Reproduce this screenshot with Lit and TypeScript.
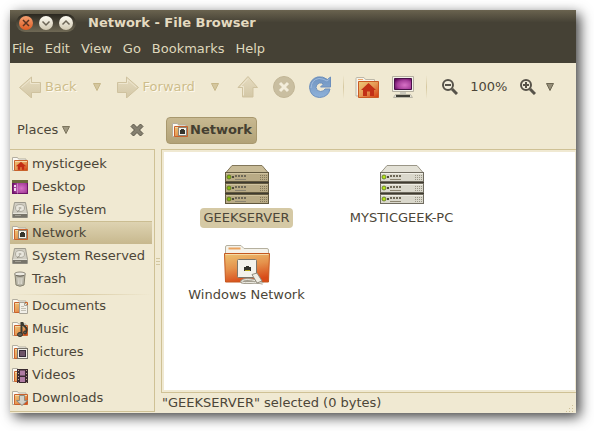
import { LitElement, html, css, svg } from "lit";
import { customElement, property, state } from "lit/decorators.js";
import { classMap } from "lit/directives/class-map.js";

/* Gradients shared by the drawings of one element. */
const defs = html`<svg class="defs" aria-hidden="true" width="0" height="0">
  <defs>
    <linearGradient id="orange" x1="0" y1="0" x2="1" y2="1">
      <stop offset="0" stop-color="#efc878" />
      <stop offset=".5" stop-color="#e59a55" />
      <stop offset="1" stop-color="#d4380c" />
    </linearGradient>
    <linearGradient id="amber" x1=".1" y1="0" x2=".4" y2="1">
      <stop offset="0" stop-color="#ecc070" />
      <stop offset=".5" stop-color="#e5924c" />
      <stop offset="1" stop-color="#d84a18" />
    </linearGradient>
    <linearGradient id="beige" x1="0" y1="0" x2="0" y2="1">
      <stop offset="0" stop-color="#e6dcc0" />
      <stop offset="1" stop-color="#d3c7a6" />
    </linearGradient>
    <linearGradient id="blue" x1="0" y1="0" x2="0" y2="1">
      <stop offset="0" stop-color="#6f93bf" />
      <stop offset="1" stop-color="#8fb2da" />
    </linearGradient>
    <radialGradient id="purple" cx=".6" cy=".6" r=".7">
      <stop offset="0" stop-color="#d873c6" />
      <stop offset=".6" stop-color="#a8409c" />
      <stop offset="1" stop-color="#5f0a5c" />
    </radialGradient>
  </defs>
</svg>`;

const folder = svg`
  <path d="M.5 14.500V1.500h5l1 1.500h7.500V14.500z" fill="#fbf9f3" stroke="#b3aea0" />
  <path d="M2.500 4.500h13v10h-13z" fill="url(#orange)" stroke="#c9622c" />
  <path d="M3 5.500h12" stroke="#f4d9a8" />`;

const drive = svg`
  <path d="M2.500 .5h11l2 11v4H.5v-4z" fill="#d0cdc2" stroke="#9d9a8e" />
  <ellipse cx="8" cy="6" rx="4.500" ry="3.500" fill="#e8e6dd" stroke="#aeab9f" />
  <ellipse cx="8" cy="6" rx="1.500" ry="1" fill="#b5b2a6" />
  <path d="M1 12h14v3.500H1z" fill="#77746a" />
  <path d="M1 11.500h14" stroke="#e4e2d8" /><path d="M3 13.500h6" stroke="#a19e92" />
  <path d="M5 10l3-2.500" stroke="#918e82" />`;

const socket = svg`
  <rect x="6.500" y="5.500" width="8" height="8" fill="#f4f2ea" stroke="#8b8577" />
  <rect x="8" y="8" width="5" height="4" fill="#35352e" /><rect x="9" y="7" width="3" height="1" fill="#35352e" />`;

const small: Record<string, unknown> = {
  home: svg`${folder}<path d="M9 6L4.500 10h1.500V13.500h2v-2.500h2V13.500h2V10h1.500z" fill="#c22c14" stroke="#c22c14" stroke-width=".5" />`,
  desktop: svg`
    <rect x=".5" y="1.500" width="15" height="13" fill="url(#purple)" stroke="#6d1467" />
    <rect x="0" y="1" width="16" height="3" fill="#6c6a3c" />
    <path d="M2 6h2v2H2zM2 9h2v3H2z" fill="#f3d9f0" />
    <path d="M5.500 4.500v10" stroke="#c882c2" />`,
  drive,
  network: svg`${folder}${socket}`,
  trash: svg`
    <path d="M3 3.500l1 10.500q4 2.500 8 0L13 3.500z" fill="#b9b6a8" stroke="#85816f" />
    <ellipse cx="8" cy="3" rx="5.500" ry="2" fill="#eceae1" stroke="#8d897c" />
    <path d="M4 4.500q4 1.500 8 0" stroke="#6e6a5e" fill="none" />
    <path d="M6 7l.5 6M8 7v6M10 7l-.5 6" stroke="#dedbd0" />`,
  documents: svg`${folder}
    <path d="M7.500 4.500h5l3 3v8h-8z" fill="#f1efe8" stroke="#a8a497" />
    <path d="M12.500 4.500v3h3" stroke="#a8a497" />
    <path d="M9 8.500h3M9 10.500h5M9 12.500h5" stroke="#c3c0b4" />`,
  music: svg`${folder}
    <path d="M9.500 13.500V2l1 0q.5 3 3 4 2 2 .5 5" stroke="#3a3a32" stroke-width="2" />
    <ellipse cx="8" cy="13.500" rx="2.500" ry="2" fill="#5d5d52" stroke="#33332c" />
    <ellipse cx="13" cy="11.500" rx="1.500" ry="1.500" fill="#5d5d52" stroke="#33332c" />`,
  pictures: svg`${folder}
    <rect x="5.500" y="4.500" width="10" height="10" fill="#f1efe8" stroke="#77736a" />
    <rect x="7.500" y="6.500" width="6" height="6" fill="#6d5468" stroke="#352a38" />`,
  videos: svg`${folder}
    <rect x="5" y="2" width="11" height="14" fill="#3a2a30" />
    <path d="M8 3.500h5v5H8zM8 10h5v5H8z" fill="#b07ca4" />
    <path d="M6.500 3v13M14.500 3v13" stroke="#c3a394" stroke-dasharray="1 2" />`,
  downloads: svg`${folder}
    <path d="M7.500 5.500h5v5h3L10 15.500 4.500 10.500h3z" fill="#d3d1c8" stroke="#8f8c81" />`,
};

const arrow = svg`<path d="M.5 11.500L12.500 1v5.500h9v10h-9V22z" fill="url(#beige)" stroke="#cfc29f" />
  <path d="M2.500 11.500L11.500 3.500v4h9" fill="none" stroke="#eee6cf" />`;

const tools: Record<string, unknown> = {
  back: arrow,
  forward: svg`<g transform="matrix(-1 0 0 1 22 0)">${arrow}</g>`,
  up: svg`<path d="M11 .5L20.500 11.500h-4.500v9.500h-10.500v-9.500H1z" fill="url(#beige)" stroke="#cfc29f" />
    <path d="M11 2.500L3.500 10.500h3v9" fill="none" stroke="#eee6cf" />`,
  stop: svg`<circle cx="11" cy="11" r="10.500" fill="#c9bea0" stroke="#c2b696" />
    <path d="M7 7l8 8M15 7l-8 8" stroke="#f3eddb" stroke-width="3" />`,
  reload: svg`<path d="M18.500 3.500L21.500 1v10H11.500l3-3q-2-1.500-4-1-3.500 1-3.500 4.500.5 4 4.500 4 3.500 0 4.500-2.500h5q-1.500 8-10.500 8.500Q1.500 21 .5 11.500 1 3 8.500 1q5.500-1 10 2.500z" fill="url(#blue)" stroke="#6c8fbd" />
    <path d="M2 12Q2.500 3.500 10 2.500q4 0 8 2.500l2.500-2" fill="none" stroke="#a0bbdd" />`,
  home: svg`<path d="M1 20V2.500q0-1 1-1h7l1.500 2h9v16z" fill="#f7f4ea" stroke="#bdb8a9" />
    <path d="M3 3.500h5" stroke="#eda46b" />
    <path d="M3.500 5.500h20v16h-20z" fill="url(#orange)" stroke="#ca5a25" />
    <path d="M13.500 7L6 14h2v6h4v-4.500h3V20h4v-6h2z" fill="#c22f16" />`,
  computer: svg`<path d="M.5.500h21v15H.5z" fill="#f3f1e9" stroke="#b4af9f" />
    <path d="M2.500 2.500h17v11h-17z" fill="url(#purple)" stroke="#4a1049" />
    <path d="M8 16h6v2H8z" fill="#cbc8bb" />
    <path d="M1.500 21.500l2-3h15l2 3z" fill="#e6e3d8" stroke="#b9b5a6" /><path d="M4 20h14" stroke="#3f3e36" stroke-width="2" />`,
  zoomOut: svg`<circle cx="6" cy="6" r="5" fill="#f3eedd" stroke="#57534a" stroke-width="2" />
    <path d="M10 10l5 5" stroke="#57534a" stroke-width="3" /><path d="M3 6h6" stroke="#57534a" stroke-width="2" />`,
  zoomIn: svg`<circle cx="6" cy="6" r="5" fill="#f3eedd" stroke="#57534a" stroke-width="2" />
    <path d="M10 10l5 5" stroke="#57534a" stroke-width="3" /><path d="M3 6h6M6 3v6" stroke="#57534a" stroke-width="2" />`,
};

const drawing = (content: unknown, w: number, h: number) =>
  html`<svg width=${w} height=${h} viewBox="0 0 ${w} ${h}" aria-hidden="true">${content}</svg>`;

const triangle = drawing(svg`<path d="M.5.5h7L4 7.500z" fill="currentColor" fill-opacity=".7" stroke="currentColor" />`, 8, 8);

const unit = (y: number, lit: boolean) => svg`
  <rect x=".5" y="${y}.5" width="43" height="9" fill=${lit ? "#dad8cc" : "#b9ab86"} stroke=${lit ? "#706c60" : "#62593f"} />
  <path d="M1 ${y + 1}.500h42" stroke=${lit ? "#f1efe6" : "#d0c3a0"} />
  <circle cx="4" cy="${y + 5}" r="2" fill=${lit ? "#b4e614" : "#86bb08"} stroke="#5c6e28" stroke-width=".8" />
  <path d="M7 ${y + 5}h2" stroke="#4f4a3c" stroke-width="2" />
  <path d="M10 ${y + 4}h11" stroke="#6e6857" stroke-width="2" stroke-dasharray="2 1" />
  <path d="M10 ${y + 7}.500h11" stroke="#8c8571" />
  <path d="M35 ${y + 3}.500h7M35 ${y + 5}.500h7M35 ${y + 7}.500h7" stroke=${lit ? "#9a9687" : "#82775a"} stroke-dasharray="1 1" />`;

const server = (lit: boolean) => svg`
  <path d="M1 7.500L7 .5h30l6 7z" fill=${lit ? "#e3e1d6" : "#c8bb97"} stroke=${lit ? "#9a9687" : "#82775a"} />
  <path d="M0 17.500h44M0 28.500h44" stroke="#3f3b30" />
  ${unit(7, lit)}${unit(18, lit)}${unit(29, lit)}`;

const sharedFolder = svg`
  <path d="M1.500 12V2q0-1.500 1.500-1.500h14l3 3h23q1.500 0 1.500 1.500v8z" fill="#f4f2ea" stroke="#b5b09f" />
  <path d="M4.500 3.500h12" stroke="#eaa35f" stroke-width="2" />
  <path d="M.5 8.500h45l-1 28.500h-43z" fill="url(#amber)" stroke="#c4581f" />
  <path d="M1.500 9.500h43" stroke="#f6d9a6" />
  <rect x="13.500" y="14.500" width="19" height="18" rx="1" fill="#f4f3ec" stroke="#7d776b" />
  <path d="M20 26v-4h2v-1h3v1h2v4z" fill="#33332b" /><path d="M21 25.500h5" stroke="#b8a81c" />
  <path d="M33 36q-12-3-15 0-2 2 8 1.500t13 1" fill="none" stroke="#a39e90" stroke-width="3" />
  <path d="M33 36q-12-3-15 0-2 2 8 1.500t13 1" fill="none" stroke="#eeece3" />
  <path d="M28 29.500l5-1.500 5 8-5 2z" fill="#efede4" stroke="#918c7e" />`;

const controls = css`
  :host { font: 13px/20px "DejaVu Sans", sans-serif; color: #4c4638; }
  button { font: inherit; color: inherit; background: none; border: 0; margin: 0; padding: 0; text-align: left; white-space: nowrap; }
  svg { display: block; flex: none; fill: none; }
  .defs { position: absolute; }
`;

interface Place { name: string; icon: string; }

@customElement("places-panel")
export class PlacesPanel extends LitElement {
  @property() selected = "";

  static styles = [controls, css`
    :host { display: flex; flex-direction: column; padding-bottom: 1px; }
    header { display: flex; align-items: center; justify-content: space-between; height: 38px; padding: 0 11px 0 7px; }
    .title { display: flex; align-items: center; gap: 4px; }
    .title svg { color: #7c755e; }
    nav { flex: 1; border: 1px solid #cfc195; border-left: 0; padding: 2px 2px 1px 0; }
    ul { list-style: none; margin: 0; padding: 0; }
    ul + ul { margin-top: 4px; background: linear-gradient(90deg, transparent, #d9cba4 50%, transparent) top / 100% 1px no-repeat; }
    .place { display: flex; align-items: center; gap: 4px; width: 100%; height: 23px; padding-left: 2px; }
    .current { background: linear-gradient(#dfd4b3, #c7b88e); box-shadow: inset 0 1px #cbbd92; }
  `];

  private groups: Place[][] = [
    [
      { name: "mysticgeek", icon: "home" },
      { name: "Desktop", icon: "desktop" },
      { name: "File System", icon: "drive" },
      { name: "Network", icon: "network" },
      { name: "System Reserved", icon: "drive" },
      { name: "Trash", icon: "trash" },
    ],
    [
      { name: "Documents", icon: "documents" },
      { name: "Music", icon: "music" },
      { name: "Pictures", icon: "pictures" },
      { name: "Videos", icon: "videos" },
      { name: "Downloads", icon: "downloads" },
    ],
  ];

  render() {
    return html`${defs}
      <header>
        <button class="title">Places ${triangle}</button>
        <button aria-label="Close side pane">
          ${drawing(svg`<path d="M1 3.500L3.500 1 7 4.500 10.500 1 13 3.500 9.500 7l3.500 3.500-2.500 2.500L7 9.500 3.500 13 1 10.500 4.500 7z" fill="#858070" stroke="#5a5548" />`, 14, 14)}
        </button>
      </header>
      <nav aria-label="Places">
        ${this.groups.map((group) => html`<ul>
          ${group.map((p) => html`<li>
            <button class=${classMap({ place: true, current: p.name === this.selected })}>
              ${drawing(small[p.icon], 16, 16)}${p.name}
            </button>
          </li>`)}
        </ul>`)}
      </nav>`;
  }
}

@customElement("app-root")
export class AppRoot extends LitElement {
  @state() private selected = "GEEKSERVER";

  static styles = [controls, css`
    :host { display: block; box-sizing: border-box; min-height: 100vh; padding: 10px 18px 18px 10px; background: #fff; }
    .window { display: flex; flex-direction: column; min-height: calc(100vh - 28px); background: #f0e9d2; box-shadow: 4px 4px 12px rgba(0, 0, 0, .75); }
    .titlebar { display: flex; align-items: center; gap: 12px; height: 25px; padding-left: 6px; background: linear-gradient(#6a634f, #454135 50%); color: #e4dac0; }
    h1 { font-size: 13px; line-height: 20px; margin: 0; }
    .buttons { display: flex; gap: 6px; padding: 2px 3px; border-radius: 10px; background: linear-gradient(#2a271f, #6f6955); }
    .round { display: block; width: 14px; height: 14px; border-radius: 50%; background: linear-gradient(#fffdf4, #d0c8b1); }
    .close { background: linear-gradient(#f5a071, #dd5b22); }
    .menubar { display: flex; gap: 11px; height: 28px; padding: 0 2px; align-items: center; background: #454135; color: #dfd7bb; }
    .toolbar { display: flex; align-items: center; height: 48px; padding: 0 4px; }
    .labelled { display: flex; align-items: center; gap: 4px; padding: 0 5px; }
    .off { color: #cdbd8b; text-shadow: 1px 1px #fffaf0; }
    .drop { display: flex; justify-content: center; width: 30px; color: #6d6753; }
    .drop.off { color: #c7b788; }
    .tool { display: flex; justify-content: center; width: 36px; }
    .zoom { width: 42px; text-align: center; }
    .drop.narrow { width: 8px; }
    .rule { width: 1px; height: 24px; margin: 0 5px; background: linear-gradient(transparent, #d6c8a0, transparent); }
    .body { display: grid; grid-template-columns: 145px 6px 1fr; flex: 1; }
    .splitter { display: flex; align-items: center; justify-content: center; }
    .pane { display: flex; flex-direction: column; min-width: 0; }
    .path { display: flex; align-items: center; height: 38px; padding-left: 5px; }
    .crumb { display: flex; align-items: center; gap: 2px; height: 27px; padding: 0 4px 0 5px; box-sizing: border-box; border: 1px solid #a8986e; border-radius: 4px; background: linear-gradient(#c8b991, #b2a277); font-weight: bold; color: #453f31; }
    .view { display: grid; grid-template-columns: repeat(auto-fill, 155px); align-content: start; flex: 1; padding: 15px 7px 0; background: #fff; border: 1px solid #cfc195; border-right: 0; box-shadow: inset 2px 2px #f0e9d2, inset -1px -2px #f0e9d2; }
    .item { display: flex; flex-direction: column; align-items: center; height: 80px; }
    .name { padding: 0 4px; border-radius: 4px; }
    .machine { gap: 3px; }
    .item.selected .name { background: #d5c9a5; }
    .status { display: flex; align-items: center; justify-content: space-between; height: 20px; padding: 0 2px 0 1px; }
    .grip { align-self: flex-end; }
  `];

  private items = [
    { name: "GEEKSERVER", server: true },
    { name: "MYSTICGEEK-PC", server: true },
    { name: "Windows Network", server: false },
  ];

  render() {
    const tool = (icon: string, label: string, size = 22, width = size) =>
      html`<button class="tool" aria-label=${label}>${drawing(tools[icon], width, size)}</button>`;
    return html`${defs}
      <div class="window">
        <header class="titlebar">
          <div class="buttons">
            <button class="round close" aria-label="Close">${drawing(svg`<path d="M4 4l6 6M10 4l-6 6" stroke="#5a3320" stroke-width="1.500" />`, 14, 14)}</button>
            <button class="round" aria-label="Minimize">${drawing(svg`<path d="M3.500 5.500L7 9l3.500-3.500" stroke="#6b6556" stroke-width="1.500" />`, 14, 14)}</button>
            <button class="round" aria-label="Maximize">${drawing(svg`<path d="M3.500 8.500L7 5l3.500 3.500" stroke="#6b6556" stroke-width="1.500" />`, 14, 14)}</button>
          </div>
          <h1>Network - File Browser</h1>
        </header>
        <nav class="menubar" aria-label="Menu">
          ${["File", "Edit", "View", "Go", "Bookmarks", "Help"].map((m) => html`<button>${m}</button>`)}
        </nav>
        <div class="toolbar" role="toolbar">
          <button class="labelled off">${drawing(tools.back, 22, 22)}Back</button>
          <button class="drop off" aria-label="Back history">${triangle}</button>
          <button class="labelled off">${drawing(tools.forward, 22, 22)}Forward</button>
          <button class="drop off" aria-label="Forward history">${triangle}</button>
          ${tool("up", "Up")}${tool("stop", "Stop")}${tool("reload", "Reload")}
          <span class="rule"></span>
          ${tool("home", "Home", 22, 24)}${tool("computer", "Computer")}
          <span class="rule"></span>
          ${tool("zoomOut", "Zoom out", 16)}
          <button class="zoom">100%</button>
          ${tool("zoomIn", "Zoom in", 16)}
          <button class="drop narrow" aria-label="View as">${triangle}</button>
        </div>
        <div class="body">
          <places-panel selected="Network"></places-panel>
          <div class="splitter">${drawing(svg`<path d="M0 .5h4M0 3.500h4M0 6.500h4" stroke="#d3c7a0" />`, 4, 8)}</div>
          <main class="pane">
            <div class="path"><button class="crumb">${drawing(small.network, 16, 16)}Network</button></div>
            <div class="view">
              ${this.items.map((i) => html`<button
                class=${classMap({ item: true, machine: i.server, selected: i.name === this.selected })}
                @click=${() => (this.selected = i.name)}>
                ${i.server ? drawing(server(i.name !== this.selected), 44, 40) : drawing(sharedFolder, 46, 40)}
                <span class="name">${i.name}</span>
              </button>`)}
            </div>
            <footer class="status">
              <span>"${this.selected}" selected (0 bytes)</span>
              <span class="grip">${drawing(svg`<path d="M7 1h1v1H7zM4 4h1v1H4zM7 4h1v1H7zM1 7h1v1H1zM4 7h1v1H4zM7 7h1v1H7z" fill="#cdbf96" />`, 9, 9)}</span>
            </footer>
          </main>
        </div>
      </div>`;
  }
}
